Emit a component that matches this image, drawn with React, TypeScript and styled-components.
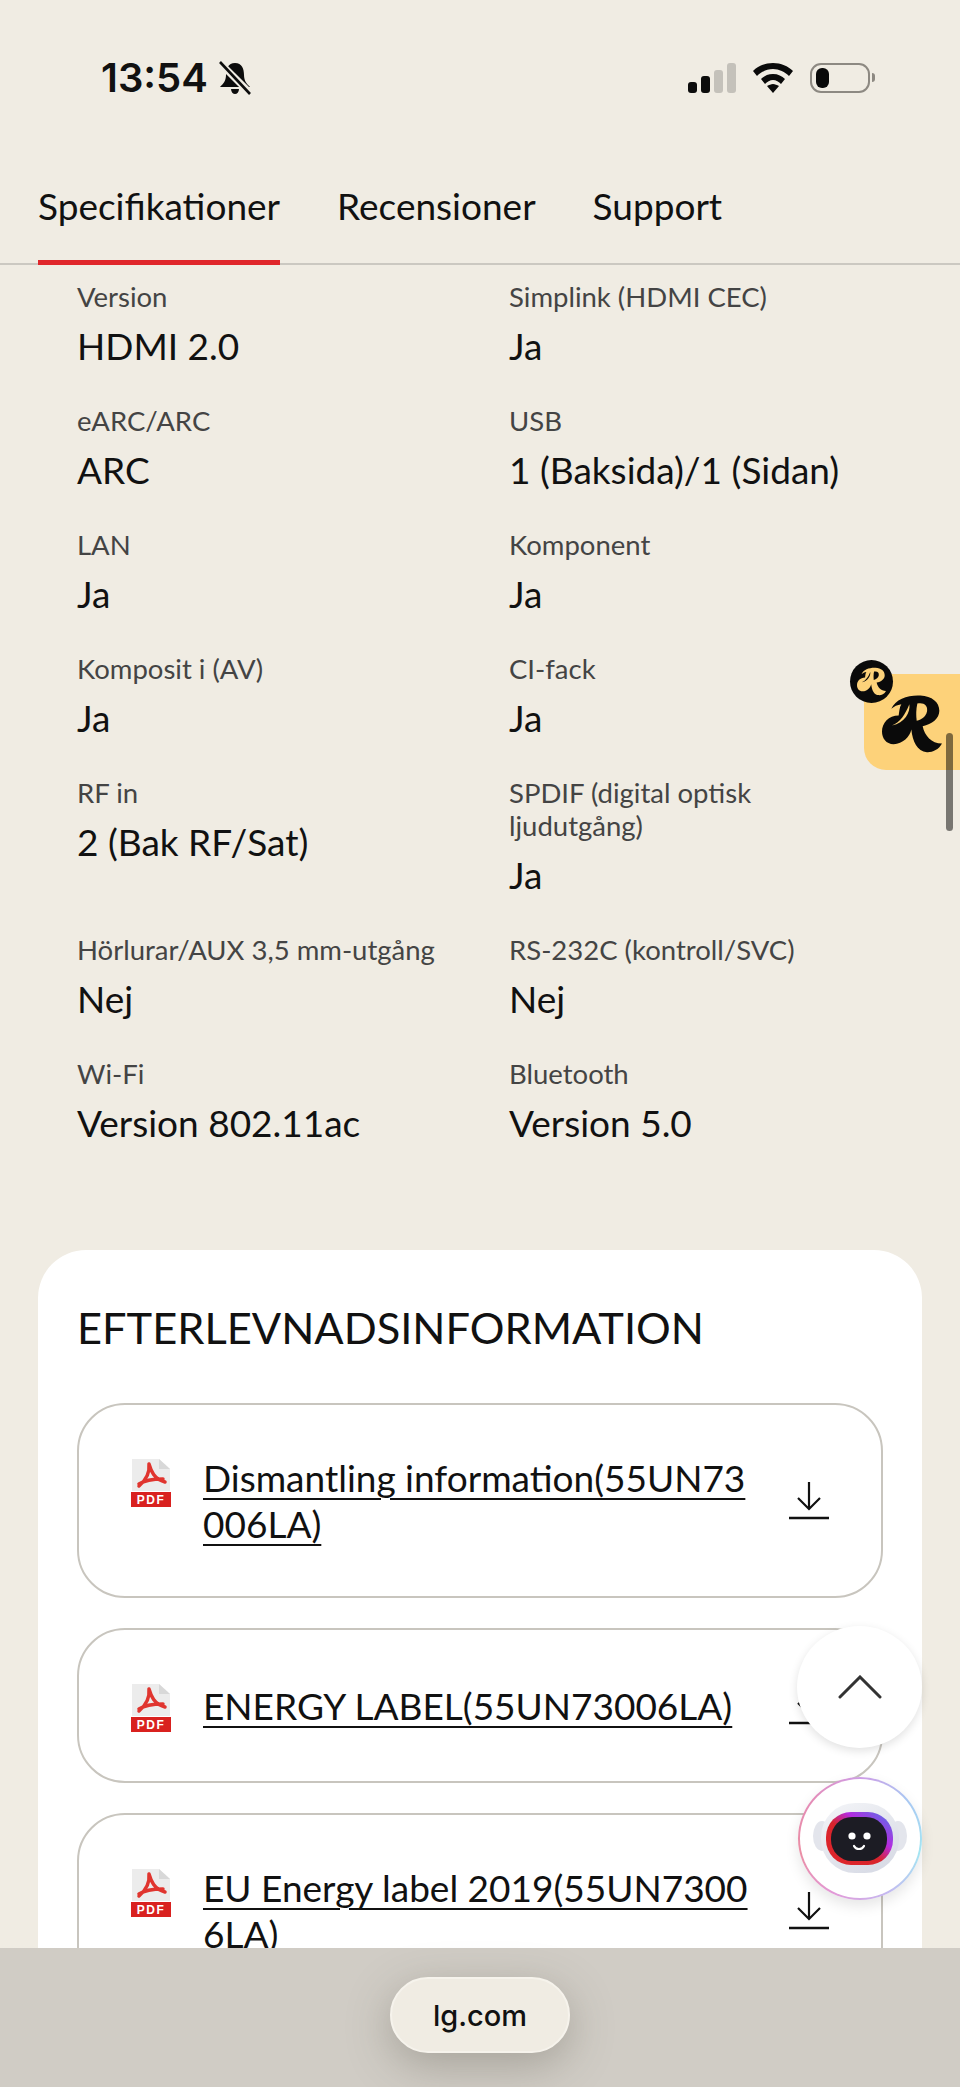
import styled, { createGlobalStyle } from "styled-components";

const GlobalStyle = createGlobalStyle`
  html, body {
    margin: 0;
    padding: 0;
    background: #f0ece3;
  }
  * {
    box-sizing: border-box;
  }
`;

const Page = styled.div`
  position: relative;
  width: 960px;
  height: 2087px;
  overflow: hidden;
  background: #f0ece3;
  color: #111;
  font-family: Lato, "Noto Sans", sans-serif;
`;

const StatusBar = styled.div`
  display: flex;
  justify-content: space-between;
  align-items: center;
  height: 155px;
  padding: 0 90px 0 101px;
`;

const StatusLeft = styled.div`
  display: flex;
  align-items: center;
  gap: 10px;
`;

const Clock = styled.span`
  font-family: Inter, sans-serif;
  font-size: 40px;
  font-weight: 600;
  line-height: 48px;
  color: #111;
`;

const StatusRight = styled.div`
  display: flex;
  align-items: center;
  gap: 17px;
`;

const SignalBars = styled.div`
  display: flex;
  align-items: flex-end;
  gap: 4px;
  height: 30px;
`;

const SignalBar = styled.span<{ $h: number; $on: boolean }>`
  width: 9px;
  height: ${(p) => p.$h}px;
  border-radius: 3px;
  background: ${(p) => (p.$on ? "#0c0c0c" : "#c4c1ba")};
`;

const Battery = styled.div`
  position: relative;
  width: 60px;
  height: 30px;
  padding: 3px 4px;
  border: 2.5px solid #8d8982;
  border-radius: 11px;

  &::after {
    content: "";
    position: absolute;
    right: -7px;
    top: 8px;
    width: 3px;
    height: 9px;
    border-radius: 0 4px 4px 0;
    background: #8d8982;
  }
`;

const BatteryFill = styled.div`
  width: 13px;
  height: 100%;
  border-radius: 6px;
  background: #0a0a0a;
`;

const Tabs = styled.div`
  display: flex;
  gap: 57px;
  height: 110px;
  padding: 0 38px;
  border-bottom: 2px solid #cbc8c1;
`;

const Tab = styled.div<{ $active?: boolean }>`
  height: 110px;
  padding-top: 27px;
  font-size: 37px;
  line-height: 48px;
  color: #111;
  border-bottom: ${(p) => (p.$active ? "5px solid #e0262b" : "none")};
`;

const SpecGrid = styled.div`
  display: grid;
  grid-template-columns: 432px 1fr;
  padding: 15px 40px 0 77px;
`;

const SpecItem = styled.div`
  padding-bottom: 35px;
`;

const SpecLabel = styled.div`
  font-size: 27.5px;
  line-height: 33px;
  color: #444;
  max-width: 375px;
`;

const SpecValue = styled.div`
  margin-top: 9px;
  font-size: 37px;
  line-height: 47px;
  color: #111;
`;

const Card = styled.div`
  margin: 69px 38px 0;
  padding: 50px 39px;
  background: #fff;
  border-radius: 48px;
`;

const CardTitle = styled.h2`
  margin: 0 0 49px;
  font-size: 43.4px;
  font-weight: 400;
  line-height: 54px;
  color: #111;
`;

const FileList = styled.div`
  display: flex;
  flex-direction: column;
  gap: 30px;
`;

const FileRow = styled.a`
  display: flex;
  align-items: center;
  padding: 50px 52px 49px;
  border: 2px solid #c8c5be;
  border-radius: 48px;
  color: #111;
`;

const FileIcon = styled.svg`
  flex: none;
  align-self: flex-start;
  width: 40px;
  height: 48px;
  margin: 4px 32px 0 0;
`;

const FileName = styled.span`
  flex: 1;
  min-width: 0;
  font-size: 37px;
  line-height: 46px;
  white-space: pre;
  text-decoration: underline;
  text-decoration-thickness: 2px;
  text-underline-offset: 6px;
`;

const DownloadIcon = styled.svg`
  flex: none;
  width: 40px;
  height: 38px;
  margin-left: 44px;
`;

const BottomBar = styled.div`
  position: absolute;
  left: 0;
  right: 0;
  bottom: 0;
  height: 139px;
  display: flex;
  justify-content: center;
  padding-top: 29px;
  background: #d0ccc5;
`;

const UrlPill = styled.div`
  width: 180px;
  height: 76px;
  display: flex;
  align-items: center;
  justify-content: center;
  border-radius: 38px;
  border: 2px solid #f6f3ec;
  background: #f0ece3;
  box-shadow: 0 12px 44px rgba(90, 85, 75, 0.35);
  font-family: Inter, sans-serif;
  font-size: 29px;
  font-weight: 500;
  color: #111;
`;

const FloatButton = styled.div`
  position: absolute;
  left: 797px;
  top: 1626px;
  width: 125px;
  height: 122px;
  border-radius: 50%;
  display: flex;
  align-items: center;
  justify-content: center;
  background: #fff;
  box-shadow: 0 3px 10px rgba(0, 0, 0, 0.12);
`;

const ChatButton = styled.div`
  position: absolute;
  left: 798px;
  top: 1777px;
  width: 124px;
  height: 123px;
  border-radius: 50%;
  display: flex;
  align-items: center;
  justify-content: center;
  padding: 2px;
  background: conic-gradient(from 0deg, #cf9ce6, #a9c8f2, #a4e6f2, #c5b8f0, #e29ad8, #ea8ea4, #e48cb8, #cf9ce6);
  box-shadow: 0 6px 14px rgba(0, 0, 0, 0.1);
`;

const ChatInner = styled.div`
  width: 100%;
  height: 100%;
  border-radius: 50%;
  display: flex;
  align-items: center;
  justify-content: center;
  background: #fff;
`;

const PromoTab = styled.div`
  position: absolute;
  right: 0;
  top: 674px;
  width: 96px;
  height: 96px;
  padding: 20px 0 0 18px;
  border-radius: 22px 0 0 22px;
  background: #fdd27a;
`;

const PromoBadge = styled.div`
  position: absolute;
  left: 850px;
  top: 660px;
  width: 43px;
  height: 43px;
  display: flex;
  align-items: center;
  justify-content: center;
  border-radius: 50%;
  background: #0a0a0a;
`;

const ScrollThumb = styled.div`
  position: absolute;
  left: 946px;
  top: 733px;
  width: 7px;
  height: 98px;
  border-radius: 4px;
  background: rgba(0, 0, 0, 0.5);
`;

const specs = [
  ["Version", "HDMI 2.0"],
  ["Simplink (HDMI CEC)", "Ja"],
  ["eARC/ARC", "ARC"],
  ["USB", "1 (Baksida)/1 (Sidan)"],
  ["LAN", "Ja"],
  ["Komponent", "Ja"],
  ["Komposit i (AV)", "Ja"],
  ["CI-fack", "Ja"],
  ["RF in", "2 (Bak RF/Sat)"],
  ["SPDIF (digital optisk ljudutgång)", "Ja"],
  ["Hörlurar/AUX 3,5 mm-utgång", "Nej"],
  ["RS-232C (kontroll/SVC)", "Nej"],
  ["Wi-Fi", "Version 802.11ac"],
  ["Bluetooth", "Version 5.0"],
];

const files = [
  "Dismantling information(55UN73\n006LA)",
  "ENERGY LABEL(55UN73006LA)",
  "EU Energy label 2019(55UN7300\n6LA)",
];

const PdfGlyph = () => (
  <FileIcon viewBox="0 0 40 48">
    <path d="M1 0H28L39 10V32H1Z" fill="#ececec" />
    <path d="M28 0L39 10H28Z" fill="#d8d8d8" />
    <path
      d="M18 5C20 12 23 20 34 23M18 5C19 14 15 21 8 27M8 25C14 21 24 20 32 20"
      fill="none"
      stroke="#e0352f"
      strokeWidth="3.5"
      strokeLinecap="round"
    />
    <rect x="0" y="33" width="40" height="15" fill="#d9211f" />
    <text x="20" y="45" textAnchor="middle" fontFamily="Liberation Sans" fontWeight="700" fontSize="12" letterSpacing="1.5" fill="#fff">
      PDF
    </text>
  </FileIcon>
);

const DownloadGlyph = () => (
  <DownloadIcon viewBox="0 0 40 38" fill="none" stroke="#111" strokeWidth="2.2">
    <path d="M20 0V27M9 16L20 27L31 16" />
    <path d="M0 36H40" strokeWidth="2.6" />
  </DownloadIcon>
);

// the swashy R of the promo widget
const RMark = ({ size, ink, paper }: { size: number; ink: string; paper: string }) => (
  <svg width={size} height={size} viewBox="0 0 180 175">
    <path
      d="M28 42C40 12 80 0 115 2C150 4 172 22 172 48C172 72 150 88 122 94C128 122 148 146 180 146C170 165 150 173 135 172C105 170 92 140 88 104C84 125 62 148 35 148C12 148 0 130 0 110C0 85 20 62 50 62C52 50 52 38 58 28C46 30 36 34 28 42Z"
      fill={ink}
    />
    <path d="M106 26C126 22 138 32 135 50C132 64 120 74 104 78C102 60 102 44 106 26Z" fill={paper} />
    <path d="M30 92C55 82 70 58 82 28C86 52 68 84 30 92Z" fill={paper} />
  </svg>
);

const App = () => {
  return (
    <Page>
      <GlobalStyle />
      <StatusBar>
        <StatusLeft>
          <Clock>13:54</Clock>
          <svg width="34" height="34" viewBox="0 0 34 34">
            <path d="M17 2C10 2 8 8 8 14C8 20 5 23 2 26H32C29 23 26 20 26 14C26 8 24 2 17 2Z" fill="#0c0c0c" />
            <path d="M13 28H21C21 31 19 33 17 33C15 33 13 31 13 28Z" fill="#0c0c0c" />
            <path d="M1 1L33 33" stroke="#f0ece3" strokeWidth="7" />
            <path d="M2 1L32 33" stroke="#0c0c0c" strokeWidth="2.6" />
          </svg>
        </StatusLeft>
        <StatusRight>
          <SignalBars>
            <SignalBar $h={11} $on />
            <SignalBar $h={17} $on />
            <SignalBar $h={23} $on={false} />
            <SignalBar $h={30} $on={false} />
          </SignalBars>
          <svg width="40" height="30" viewBox="0 0 40 30">
            <path d="M20 0C12 0 5 3 0 8L4 13C8 9 14 6 20 6C26 6 32 9 36 13L40 8C35 3 28 0 20 0Z" fill="#0a0a0a" />
            <path d="M20 11C15 11 11 13 8 16L12 21C14 19 17 17 20 17C23 17 26 19 28 21L32 16C29 13 25 11 20 11Z" fill="#0a0a0a" />
            <path d="M20 21C18 21 16 22 14 23L20 30L26 23C24 22 22 21 20 21Z" fill="#0a0a0a" />
          </svg>
          <Battery>
            <BatteryFill />
          </Battery>
        </StatusRight>
      </StatusBar>

      <Tabs>
        <Tab $active>Specifikationer</Tab>
        <Tab>Recensioner</Tab>
        <Tab>Support</Tab>
      </Tabs>

      <SpecGrid>
        {specs.map(([label, value]) => (
          <SpecItem key={label}>
            <SpecLabel>{label}</SpecLabel>
            <SpecValue>{value}</SpecValue>
          </SpecItem>
        ))}
      </SpecGrid>

      <Card>
        <CardTitle>EFTERLEVNADSINFORMATION</CardTitle>
        <FileList>
          {files.map((name) => (
            <FileRow key={name}>
              <PdfGlyph />
              <FileName>{name}</FileName>
              <DownloadGlyph />
            </FileRow>
          ))}
        </FileList>
      </Card>

      <PromoTab>
        <RMark size={60} ink="#0a0a0a" paper="#fdd27a" />
      </PromoTab>
      <PromoBadge>
        <RMark size={29} ink="#fdd27a" paper="#0a0a0a" />
      </PromoBadge>
      <ScrollThumb />

      <FloatButton>
        <svg width="44" height="24" viewBox="0 0 44 24" fill="none" stroke="#333" strokeWidth="3" strokeLinecap="round">
          <path d="M2 22L22 2L42 22" />
        </svg>
      </FloatButton>

      <ChatButton>
        <ChatInner>
          <svg width="94" height="78" viewBox="0 0 94 78">
            <defs>
              <linearGradient id="ring" x1="1" y1="0" x2="0" y2="1">
                <stop offset="0" stopColor="#4f7ae8" />
                <stop offset="0.35" stopColor="#b42be0" />
                <stop offset="0.55" stopColor="#d8242c" />
                <stop offset="1" stopColor="#e0262b" />
              </linearGradient>
              <linearGradient id="shell" x1="0" y1="0" x2="0.6" y2="1">
                <stop offset="0" stopColor="#f4f5f8" />
                <stop offset="1" stopColor="#d9dce6" />
              </linearGradient>
            </defs>
            <ellipse cx="9" cy="36" rx="9" ry="15" fill="#e3e5ec" />
            <ellipse cx="85" cy="36" rx="9" ry="15" fill="#e3e5ec" />
            <rect x="8" y="3" width="78" height="70" rx="34" fill="url(#shell)" />
            <rect x="13" y="12" width="67" height="53" rx="25" fill="url(#ring)" />
            <rect x="18" y="17" width="56" height="44" rx="21" fill="#1c1c24" />
            <circle cx="39" cy="36" r="3.6" fill="#fff" />
            <circle cx="54" cy="36" r="3.6" fill="#fff" />
            <path d="M41 46C43 50 49 50 51 46" fill="none" stroke="#fff" strokeWidth="2.2" strokeLinecap="round" />
          </svg>
        </ChatInner>
      </ChatButton>

      <BottomBar>
        <UrlPill>lg.com</UrlPill>
      </BottomBar>
    </Page>
  );
};

export default App;
